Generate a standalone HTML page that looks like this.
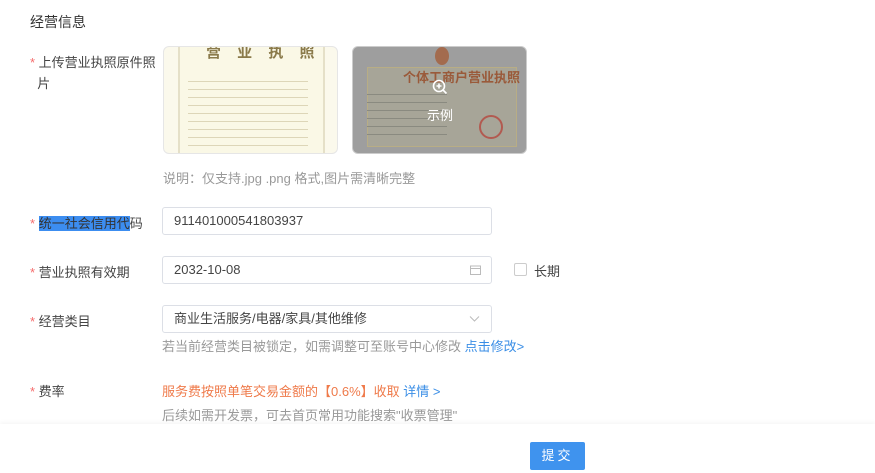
<!DOCTYPE html>
<html><head><meta charset="utf-8"><style>
*{margin:0;padding:0;box-sizing:border-box}
body{width:875px;height:473px;background:#fff;font-family:"Liberation Sans","Noto Sans CJK SC",sans-serif;position:relative;overflow:hidden;color:#444;font-size:13px}
.a{position:absolute;white-space:nowrap}
.star{color:#f56c6c}
.inp{position:absolute;left:162px;width:330px;height:28px;border:1px solid #dcdfe6;border-radius:3px;padding-left:11px;line-height:26px;font-size:13px;color:#444}
.img{position:absolute;top:46px;width:175px;height:108px;border:1px solid #e6e6e6;border-radius:6px;overflow:hidden}
</style></head><body>
<div class="a" style="left:30px;top:12px;font-size:14px;color:#333">经营信息</div>
<div class="a" style="left:30px;top:52px;line-height:21px"><span class="star">*</span> 上传营业执照原件照<br>&nbsp;&nbsp;片</div>
<div class="img" style="left:163px;background:#fbf9ec">
 <div style="position:absolute;left:14px;top:0;width:147px;height:108px;border-left:2px solid #e5e0c8;border-right:2px solid #e5e0c8;background:#faf8e6"></div>
 <div class="a" style="left:42px;top:-6px;font-size:15px;color:#8a7a4a;font-weight:bold;letter-spacing:6px">营 业 执 照</div>
 <div style="position:absolute;left:24px;top:30px;width:120px;height:70px;background:repeating-linear-gradient(#faf8e6 0 4px,#ddd6b8 4px 5px,#faf8e6 5px 8px)"></div>
</div>
<div class="img" style="left:352px;background:#9e9e9e;border-color:#ccc">
 <div style="position:absolute;left:14px;top:20px;width:150px;height:80px;border:1px solid #b8ad85;background:#a7a598"></div>
 <div class="a" style="left:50px;top:20px;font-size:13px;color:#9a5a3a;font-weight:bold">个体工商户营业执照</div>
 <div style="position:absolute;left:82px;top:0;width:14px;height:18px;border-radius:50%;background:#a36b4e"></div>
 <div style="position:absolute;left:126px;top:68px;width:24px;height:24px;border-radius:50%;border:2px solid #b25a50"></div>
 <div style="position:absolute;left:14px;top:40px;width:80px;height:50px;background:repeating-linear-gradient(transparent 0 7px,#8a8a80 7px 8px)"></div>
 <svg class="a" style="left:79px;top:32px" width="16" height="16" viewBox="0 0 16 16"><circle cx="7" cy="7" r="5.5" fill="none" stroke="#fff" stroke-width="1.6"/><path d="M7 4.5v5M4.5 7h5M11 11l3.5 3.5" stroke="#fff" stroke-width="1.6"/></svg>
 <div class="a" style="left:74px;top:58px;color:#fff;font-size:13px">示例</div>
</div>
<div class="a" style="left:163px;top:168px;color:#999;font-size:13px">说明：仅支持.jpg .png 格式,图片需清晰完整</div>

<div class="a" style="left:30px;top:213px"><span class="star">*</span> <span style="background:#3c8df0;color:#333">统一社会信用代</span>码</div>
<div class="inp" style="top:207px">911401000541803937</div>

<div class="a" style="left:30px;top:262px"><span class="star">*</span> 营业执照有效期</div>
<div class="inp" style="top:256px">2032-10-08
 <svg class="a" style="left:307px;top:8px" width="11" height="10" viewBox="0 0 11 10"><rect x=".5" y="1" width="10" height="8.5" fill="none" stroke="#bbb"/><path d="M.5 3.5h10" stroke="#bbb"/></svg></div>
<div style="position:absolute;left:514px;top:263px;width:13px;height:13px;border:1px solid #ccc;border-radius:2px"></div>
<div class="a" style="left:534px;top:261px">长期</div>

<div class="a" style="left:30px;top:311px"><span class="star">*</span> 经营类目</div>
<div class="inp" style="top:305px">商业生活服务/电器/家具/其他维修
 <svg class="a" style="left:306px;top:9px" width="11" height="8" viewBox="0 0 11 8"><path d="M1 1.5l4.5 4.5 4.5-4.5" fill="none" stroke="#bbb"/></svg></div>
<div class="a" style="left:162px;top:336px;color:#999">若当前经营类目被锁定，如需调整可至账号中心修改 <span style="color:#3a8ee6">点击修改&gt;</span></div>

<div class="a" style="left:30px;top:381px"><span class="star">*</span> 费率</div>
<div class="a" style="left:162px;top:381px;color:#ef7a4a">服务费按照单笔交易金额的【0.6%】收取 <span style="color:#3a8ee6">详情 &gt;</span></div>
<div class="a" style="left:162px;top:405px;color:#999">后续如需开发票，可去首页常用功能搜索"收票管理"</div>

<div style="position:absolute;left:0;top:424px;width:875px;height:49px;background:#fff;box-shadow:0 -2px 4px rgba(0,0,0,.04)"></div>
<div style="position:absolute;left:530px;top:442px;width:55px;height:28px;background:#3f93ee;color:#fff;border-radius:2px;text-align:center;line-height:28px;font-size:13px;letter-spacing:3px">提交</div>
</body></html>
